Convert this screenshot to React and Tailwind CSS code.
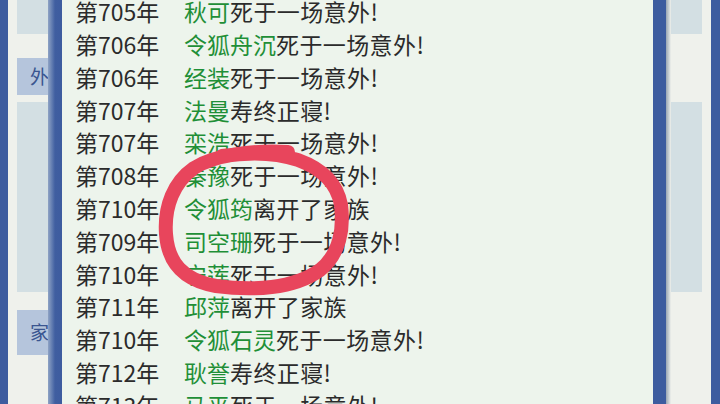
import React from 'react';

const rows = [
  ['第705年', '秋可', '死于一场意外!'],
  ['第706年', '令狐舟沉', '死于一场意外!'],
  ['第706年', '经装', '死于一场意外!'],
  ['第707年', '法曼', '寿终正寝!'],
  ['第707年', '栾浩', '死于一场意外!'],
  ['第708年', '秦豫', '死于一场意外!'],
  ['第710年', '令狐筠', '离开了家族'],
  ['第709年', '司空珊', '死于一场意外!'],
  ['第710年', '宁莲', '死于一场意外!'],
  ['第711年', '邱萍', '离开了家族'],
  ['第710年', '令狐石灵', '死于一场意外!'],
  ['第712年', '耿誉', '寿终正寝!'],
  ['第713年', '马平', '死于一场意外!'],
];

const LogRow = ({ year, name, event }) => (
  <div className="flex h-[32.8px] items-center whitespace-nowrap">
    <span className="w-[109px] shrink-0 text-[#2b2b2b]">{year}</span>
    <span className="text-[#1f8f37]">{name}</span>
    <span className="text-[#2b2b2b] tracking-[0.4px]">{event}</span>
  </div>
);

export default function App() {
  return (
    <div
      className="relative flex h-[404px] w-[720px] overflow-hidden bg-[#eff1ec]"
      style={{ fontFamily: '"Noto Sans CJK SC", "Noto Sans", sans-serif' }}
    >
      {/* outer frame left */}
      <div className="w-[8px] shrink-0 bg-[#3d5c9f]" />

      {/* page column behind dialog, left */}
      <div className="flex w-[40px] shrink-0 flex-col pl-[9px]">
        <div className="h-[34px] bg-[#d3dfe3]" />
        <div className="h-[24px]" />
        <div className="flex h-[37px] items-center bg-[#b5c5dc] pl-[13px] text-[19px] text-[#3a5590]">外</div>
        <div className="h-[7px]" />
        <div className="h-[190px] bg-[#d3dfe3]" />
        <div className="h-[18px]" />
        <div className="flex h-[45px] items-center bg-[#b5c5dc] pl-[13px] text-[19px] text-[#3a5590]">家</div>
      </div>

      {/* dialog */}
      <div className="flex w-[618px] shrink-0">
        <div className="w-[14px] shrink-0 bg-gradient-to-r from-[#8fa3c4] via-[#3f5ea0] to-[#3d5c9f]" />
        <div className="w-[591px] shrink-0 overflow-hidden bg-[#edf4ec] pl-[13px] text-[23px]">
          <div className="mt-[-5px]">
            {rows.map(([y, n, e], i) => (
              <LogRow key={i} year={y} name={n} event={e} />
            ))}
          </div>
        </div>
        <div className="w-[13px] shrink-0 bg-[#3d5c9f]" />
      </div>

      {/* page column behind dialog, right */}
      <div className="flex w-[45px] shrink-0">
        <div className="w-[5px] shrink-0 bg-gradient-to-r from-[#9aa6b4] to-[#eff1ec]" />
        <div className="flex w-[31px] flex-col">
          <div className="h-[34px] bg-[#d3dfe3]" />
          <div className="h-[68px]" />
          <div className="h-[190px] bg-[#d3dfe3]" />
        </div>
      </div>

      {/* outer frame right */}
      <div className="w-[9px] shrink-0 bg-[#3d5c9f]" />

      {/* red hand-drawn circle */}
      <svg className="pointer-events-none absolute left-0 top-0" width="720" height="404">
        <path
          d="M 288 152 C 252 150, 214 155, 194 168 C 174 182, 164 206, 166 234 C 168 262, 182 280, 216 286 C 252 291, 294 289, 320 270 C 340 254, 344 228, 341 205 C 337 182, 320 168, 298 160 C 272 151, 242 153, 222 156"
          fill="none"
          stroke="#e8455c"
          strokeWidth="14"
          strokeLinecap="round"
          strokeLinejoin="round"
        />
      </svg>
    </div>
  );
}
